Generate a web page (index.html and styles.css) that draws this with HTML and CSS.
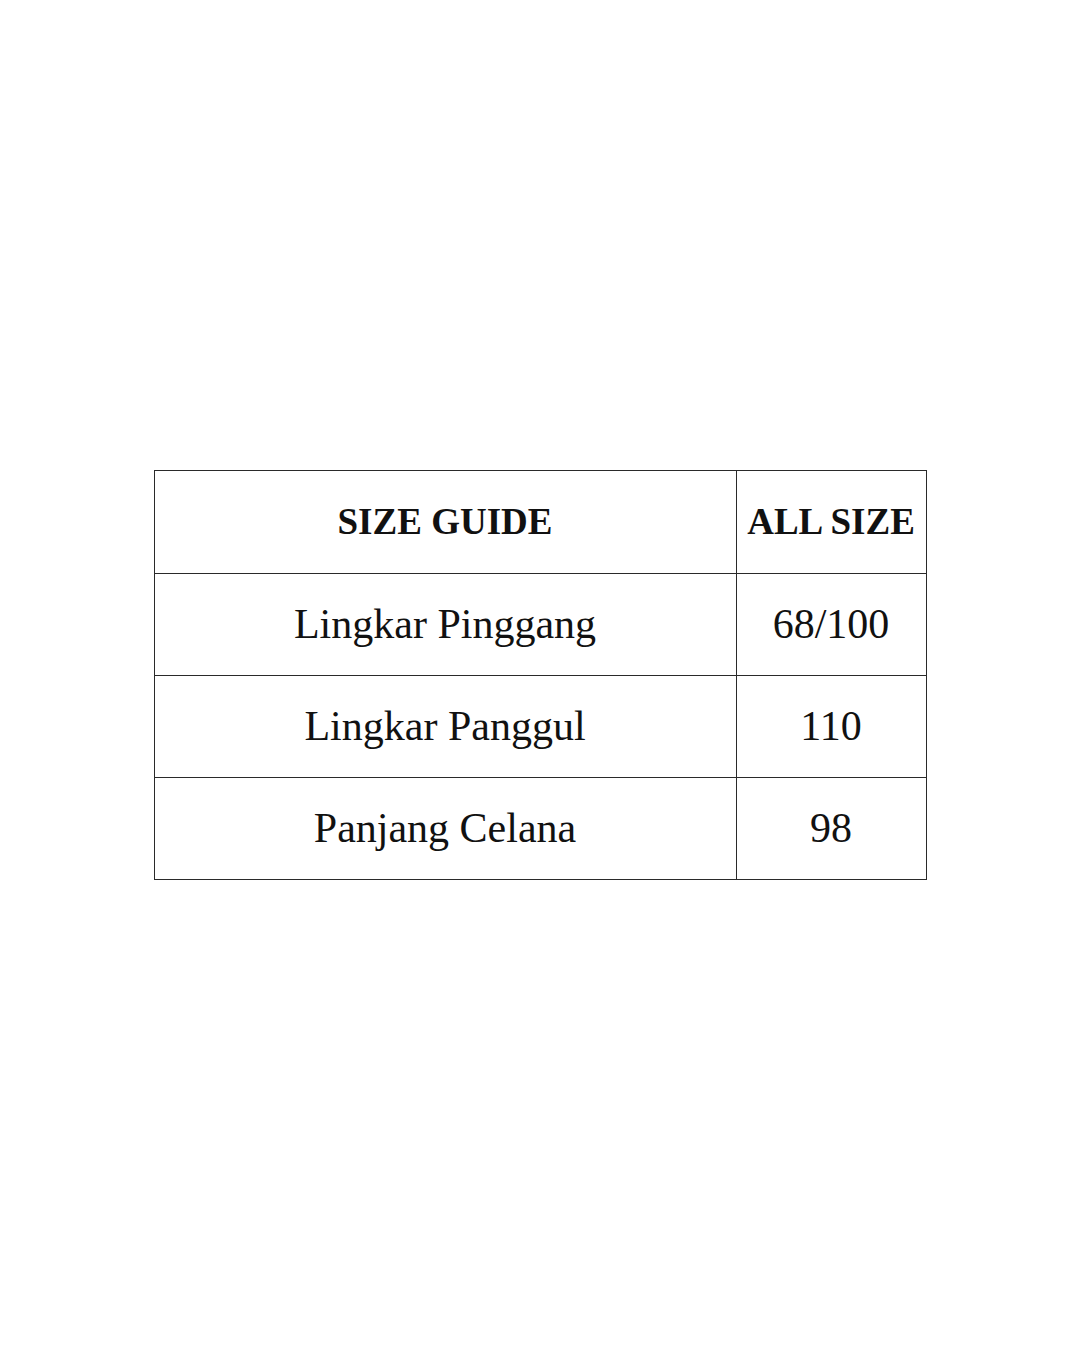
FILE: index.html
```html
<!DOCTYPE html>
<html>
<head>
<meta charset="utf-8">
<link rel="stylesheet" href="styles.css">
</head>
<body>
<main class="page">
  <table class="size-table">
    <tr class="head">
      <th class="col-name">SIZE GUIDE</th>
      <th class="col-val">ALL SIZE</th>
    </tr>
    <tr><td>Lingkar Pinggang</td><td>68/100</td></tr>
    <tr><td>Lingkar Panggul</td><td>110</td></tr>
    <tr><td>Panjang Celana</td><td>98</td></tr>
  </table>
</main>
</body>
</html>
```
FILE: styles.css
```css
html, body { margin: 0; padding: 0; background: #fff; }
.page {
  width: 1080px;
  height: 1349px;
  display: flex;
  align-items: center;
  justify-content: center;
}
.size-table {
  border-collapse: collapse;
  font-family: "Liberation Serif", serif;
  color: #111;
}
.size-table th, .size-table td {
  border: 1px solid #2a2a2a;
  height: 101px;
  padding: 0;
  text-align: center;
  vertical-align: middle;
  font-size: 42px;
  font-weight: normal;
  white-space: nowrap;
}
.size-table th {
  font-weight: bold;
  font-size: 37px;
  height: 102px;
}
.col-name { width: 581px; }
.col-val { width: 189px; }
```
